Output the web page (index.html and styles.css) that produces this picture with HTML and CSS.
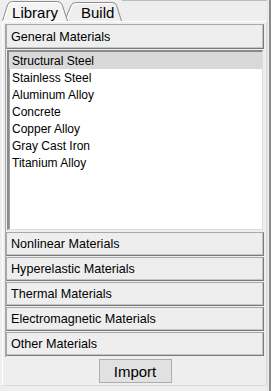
FILE: index.html
```html
<!DOCTYPE html>
<html>
<head>
<meta charset="utf-8">
<link rel="stylesheet" href="styles.css">
</head>
<body>
<div class="win">
  <div class="main">
    <div class="tabstrip">
      <div class="tab tab-sel">
        <svg class="tabshape" width="66" height="21" viewBox="0 0 66 21">
          <path d="M0.5,21 L5.5,5 Q6.8,1.5 10.5,1.5 L55.5,1.5 Q59,1.5 60.3,5 L65.5,21" fill="#f4f4f4" stroke="#8c8c8c" stroke-width="1"/>
          <path d="M2,21 L6.7,6 Q7.8,2.6 10.8,2.6 L55,2.6" fill="none" stroke="#ffffff" stroke-width="1"/>
        </svg>
        <span class="tablabel">Library</span>
      </div>
      <div class="tab tab-b">
        <svg class="tabshape" width="58" height="21" viewBox="0 0 58 21">
          <path d="M0.5,21 L6.8,6 Q8.2,2.5 11.8,2.5 L48.5,2.5 Q51.5,2.5 52.6,5.5 L57.5,21" fill="#eeeeee" stroke="#8c8c8c" stroke-width="1"/>
          <path d="M2.3,21 L8,7 Q9.2,3.6 12,3.6 L48,3.6" fill="none" stroke="#ffffff" stroke-width="1"/>
        </svg>
        <span class="tablabel">Build</span>
      </div>
      <div class="fill"></div>
    </div>
    <div class="panel">
      <div class="acc">
        <div class="hdr hdr-open">General Materials</div>
        <div class="list">
          <div class="row row-sel">Structural Steel</div>
          <div class="row">Stainless Steel</div>
          <div class="row">Aluminum Alloy</div>
          <div class="row">Concrete</div>
          <div class="row">Copper Alloy</div>
          <div class="row">Gray Cast Iron</div>
          <div class="row">Titanium Alloy</div>
        </div>
        <div class="hdr">Nonlinear Materials</div>
        <div class="hdr">Hyperelastic Materials</div>
        <div class="hdr">Thermal Materials</div>
        <div class="hdr">Electromagnetic Materials</div>
        <div class="hdr">Other Materials</div>
      </div>
      <div class="btnrow">
        <button class="btn">Import</button>
      </div>
    </div>
  </div>
  <div class="rbar"></div>
</div>
</body>
</html>
```

FILE: styles.css
```css
* { box-sizing: border-box; }
html, body { margin: 0; padding: 0; }
body {
  background: #eeeeee;
  font-family: "Liberation Sans", Arial, sans-serif;
  color: #000;
}
.win {
  width: 271px;
  height: 391px;
  display: flex;
  background: #eeeeee;
}
.main {
  width: 267px;
  display: flex;
  flex-direction: column;
}
.tabstrip {
  height: 21px;
  display: flex;
  align-items: flex-end;
  padding-left: 2px;
}
.tab {
  position: relative;
  height: 21px;
  display: flex;
  align-items: center;
  font-size: 15px;
}
.tabshape {
  position: absolute;
  left: 0;
  top: 0;
}
.tablabel {
  position: relative;
  padding-top: 3px;
}
.tab-sel {
  width: 66px;
  z-index: 2;
  justify-content: center;
}
.tab-b {
  width: 58px;
  margin-left: -4px;
  z-index: 1;
  padding-left: 17px;
}
.fill {
  flex: 1;
  align-self: stretch;
  border-top: 1px solid #bdbdbd;
}
.panel {
  flex: 1;
  margin-left: 2px;
  border-top: 1px solid #ffffff;
  border-left: 1px solid #ffffff;
  border-right: 1px solid #d9d9d9;
  border-bottom: 1px solid #d9d9d9;
  margin-bottom: 5px;
  padding: 2px 1px 0 2px;
  display: flex;
  flex-direction: column;
}
.acc {
  border-left: 1px solid #a6a6a6;
  display: flex;
  flex-direction: column;
  width: 259px;
}
.hdr {
  height: 24px;
  margin-bottom: 1px;
  border: 1px solid;
  border-color: #a8a8a8 #7a7a7a #7a7a7a #a8a8a8;
  box-shadow: inset -1px -1px 0 #c4c4c4;
  background: #eeeeee;
  font-size: 12.6px;
  display: flex;
  align-items: center;
  padding-left: 4px;
}
.hdr-open {
  height: 25px;
  margin-bottom: 1px;
}
.list {
  height: 180px;
  margin: 0 1px 2px 1px;
  background: #ffffff;
  border-top: 2px solid #8a8a8a;
  border-left: 2px solid #8a8a8a;
  border-right: 1px solid #dcdcdc;
  border-bottom: 1px solid #dcdcdc;
  box-shadow: inset 1px 1px 0 #a0a0a0;
}
.row {
  height: 17px;
  font-size: 12px;
  padding-left: 3px;
  display: flex;
  align-items: center;
}
.row-sel {
  background: #d9d9d9;
}
.btnrow {
  display: flex;
  justify-content: center;
  padding-top: 2px;
}
.btn {
  width: 73px;
  height: 24px;
  background: #e1e1e1;
  border: 1px solid #adadad;
  font-family: "Liberation Sans", Arial, sans-serif;
  font-size: 15px;
  color: #000;
  padding: 0;
}
.rbar {
  width: 4px;
  border-left: 1px solid #e4e4e4;
  background: linear-gradient(to right, #eeeeee 0, #eeeeee 1px, #8a8a8a 1px, #8a8a8a 3px);
}
```
